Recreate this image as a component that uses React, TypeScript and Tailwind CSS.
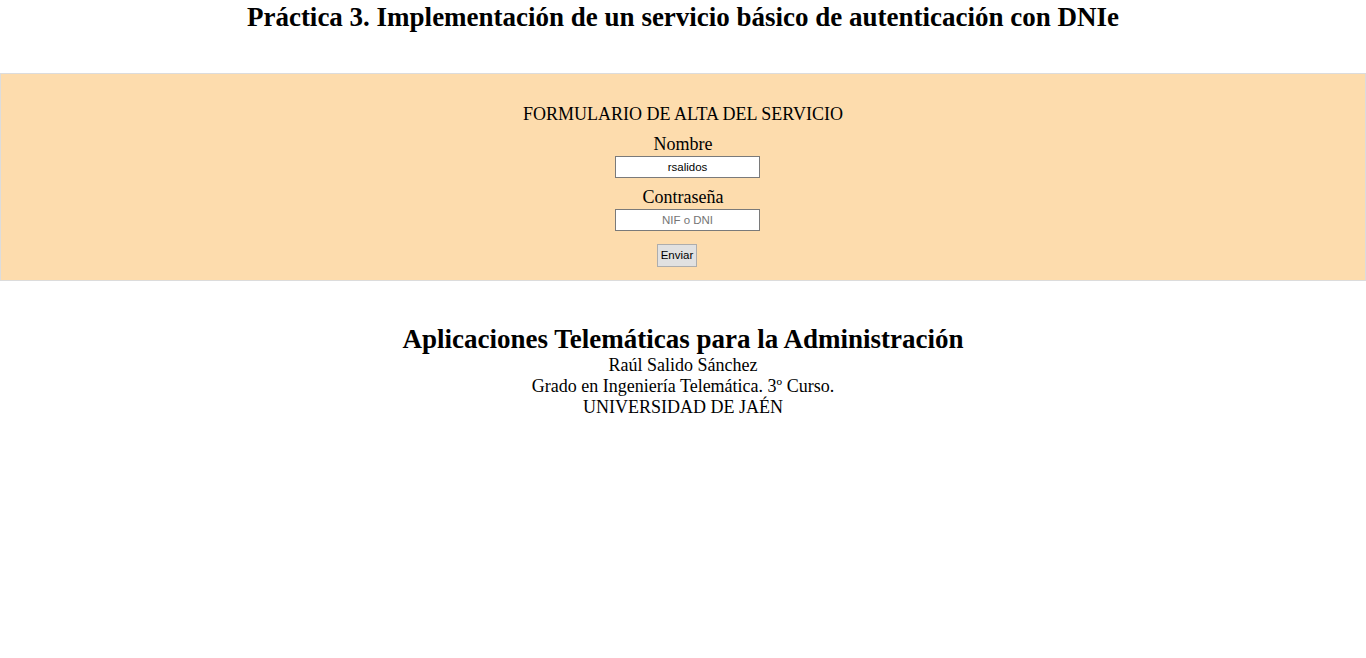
export default function App() {
  return (
    <div className="min-h-screen bg-white text-black font-['Liberation_Serif','Times_New_Roman',serif]">
      <h1 className="pt-[2px] text-center text-[27px] leading-[31px] font-bold">
        Práctica 3. Implementación de un servicio básico de autenticación con DNIe
      </h1>

      <form
        className="mt-[40px] flex flex-col items-center border border-[#dcdcdc] bg-[#fddcad] pt-[30px] pb-[13px]"
        onSubmit={(e) => e.preventDefault()}
      >
        <p className="text-[18px] leading-[21px]">FORMULARIO DE ALTA DEL SERVICIO</p>
        <label htmlFor="nombre" className="mt-[9px] text-[18px] leading-[21px]">
          Nombre
        </label>
        <input
          id="nombre"
          defaultValue="rsalidos"
          className="mt-[1px] ml-[9px] h-[22px] w-[145px] border border-[#7a7a7a] bg-white text-center font-['Liberation_Sans',Arial,sans-serif] text-[11.5px] text-black outline-none"
        />
        <label htmlFor="pass" className="mt-[9px] text-[18px] leading-[21px]">
          Contraseña
        </label>
        <input
          id="pass"
          placeholder="NIF o DNI"
          className="mt-[1px] ml-[9px] h-[22px] w-[145px] border border-[#7a7a7a] bg-white text-center font-['Liberation_Sans',Arial,sans-serif] text-[11.5px] text-black outline-none placeholder:text-[#757575]"
        />
        <button
          type="submit"
          className="mt-[13px] mr-[12px] h-[23px] w-[40px] border border-[#adadad] bg-[#e1e1e1] font-['Liberation_Sans',Arial,sans-serif] text-[11.5px] text-black"
        >
          Enviar
        </button>
      </form>

      <div className="mt-[43px] flex flex-col items-center text-center">
        <h2 className="text-[27px] leading-[31px] font-bold">Aplicaciones Telemáticas para la Administración</h2>
        <p className="text-[18px] leading-[21px]">Raúl Salido Sánchez</p>
        <p className="text-[18px] leading-[21px]">Grado en Ingeniería Telemática. 3º Curso.</p>
        <p className="text-[18px] leading-[21px]">UNIVERSIDAD DE JAÉN</p>
      </div>
    </div>
  );
}
